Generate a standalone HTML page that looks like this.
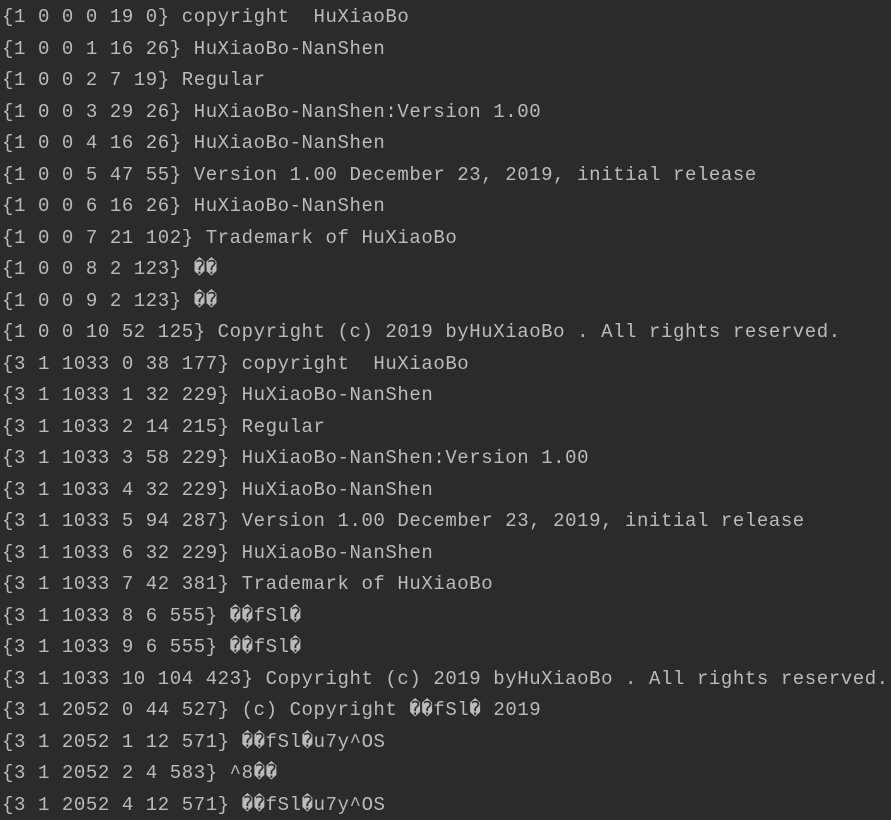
<!DOCTYPE html>
<html><head><meta charset="utf-8"><style>
html,body{margin:0;padding:0;background:#2b2b2b;width:891px;height:820px;overflow:hidden}
pre{margin:0;padding:0 0 0 2px;font-family:"Liberation Mono","DejaVu Sans Mono",monospace;font-size:19px;letter-spacing:0.58px;line-height:31.52px;color:#bbbbbb;position:relative;top:2px;white-space:pre}
</style></head><body><pre>{1 0 0 0 19 0} copyright  HuXiaoBo
{1 0 0 1 16 26} HuXiaoBo-NanShen
{1 0 0 2 7 19} Regular
{1 0 0 3 29 26} HuXiaoBo-NanShen:Version 1.00
{1 0 0 4 16 26} HuXiaoBo-NanShen
{1 0 0 5 47 55} Version 1.00 December 23, 2019, initial release
{1 0 0 6 16 26} HuXiaoBo-NanShen
{1 0 0 7 21 102} Trademark of HuXiaoBo
{1 0 0 8 2 123} ��
{1 0 0 9 2 123} ��
{1 0 0 10 52 125} Copyright (c) 2019 byHuXiaoBo . All rights reserved.
{3 1 1033 0 38 177} copyright  HuXiaoBo
{3 1 1033 1 32 229} HuXiaoBo-NanShen
{3 1 1033 2 14 215} Regular
{3 1 1033 3 58 229} HuXiaoBo-NanShen:Version 1.00
{3 1 1033 4 32 229} HuXiaoBo-NanShen
{3 1 1033 5 94 287} Version 1.00 December 23, 2019, initial release
{3 1 1033 6 32 229} HuXiaoBo-NanShen
{3 1 1033 7 42 381} Trademark of HuXiaoBo
{3 1 1033 8 6 555} ��fSl�
{3 1 1033 9 6 555} ��fSl�
{3 1 1033 10 104 423} Copyright (c) 2019 byHuXiaoBo . All rights reserved.
{3 1 2052 0 44 527} (c) Copyright ��fSl� 2019
{3 1 2052 1 12 571} ��fSl�u7y^OS
{3 1 2052 2 4 583} ^8��
{3 1 2052 4 12 571} ��fSl�u7y^OS</pre></body></html>
